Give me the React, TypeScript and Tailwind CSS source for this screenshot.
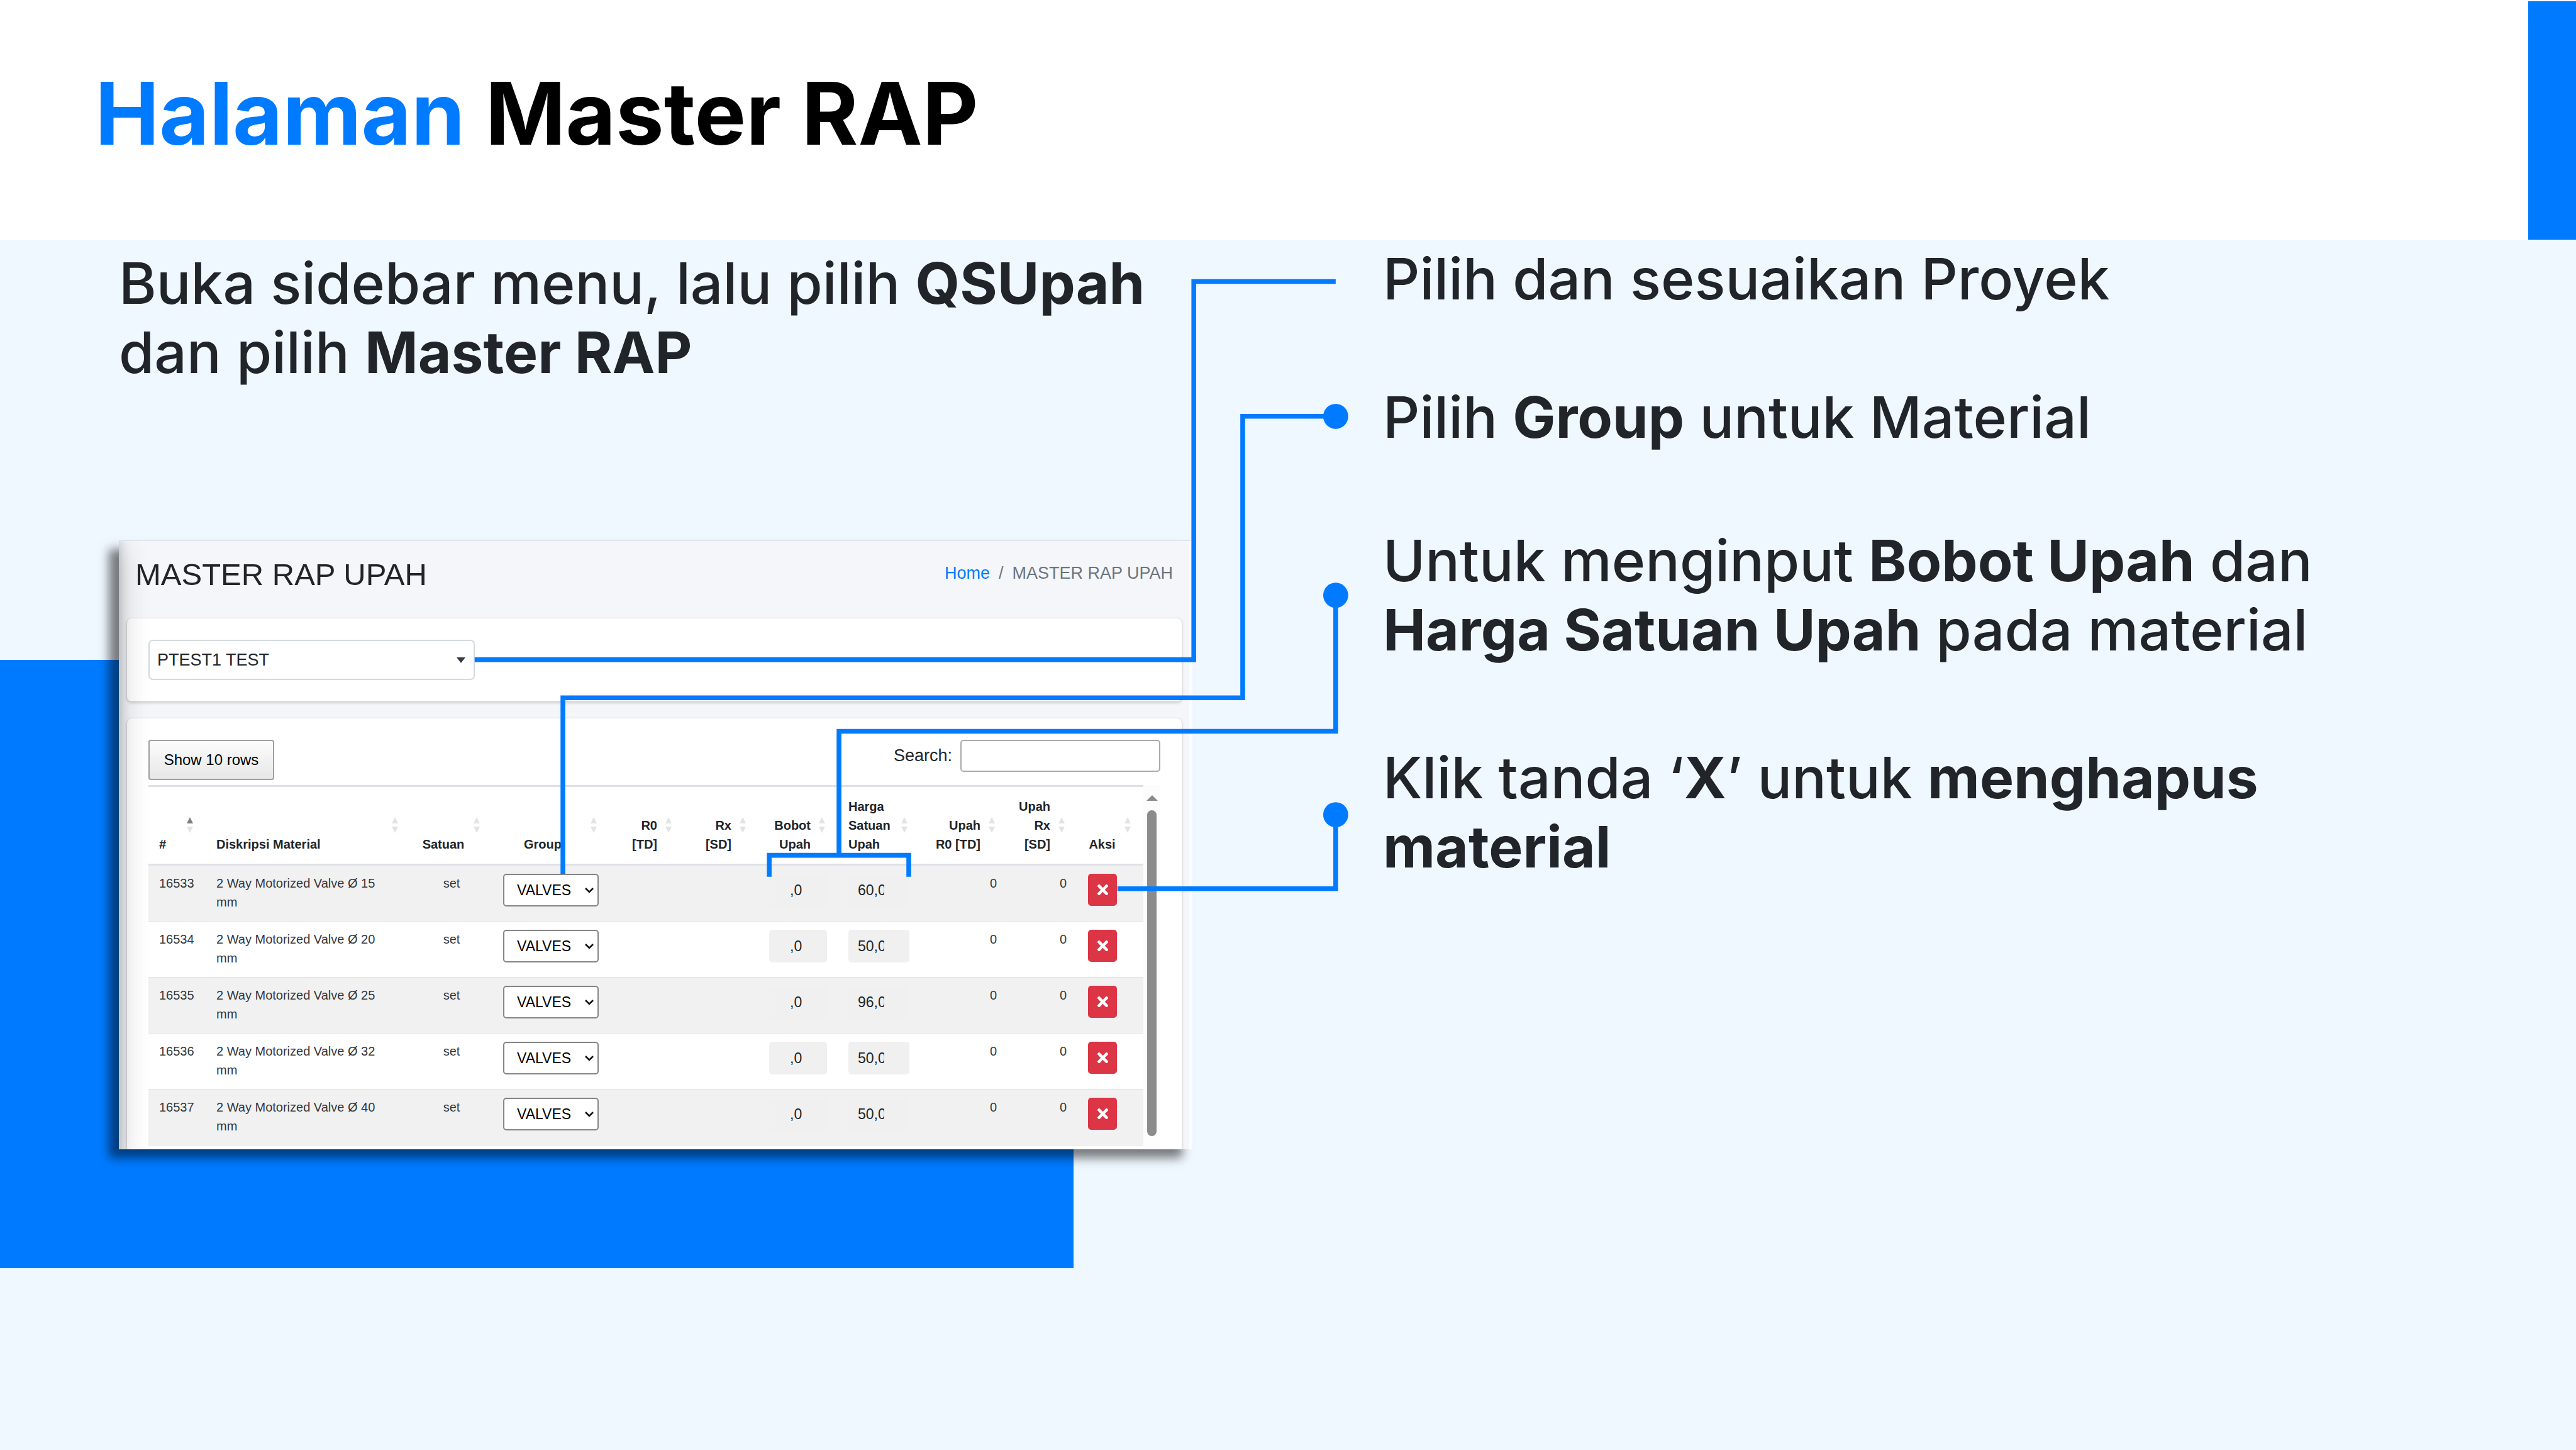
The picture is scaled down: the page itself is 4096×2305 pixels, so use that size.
import { FaTimes } from "react-icons/fa";

type Column = {
  lines: string[];
  align: string;
  width: string;
  active?: boolean;
};

const columns: Column[] = [
  { lines: ["#"], align: "text-left", width: "w-[91px]", active: true },
  { lines: ["Diskripsi Material"], align: "text-left", width: "w-[326px]" },
  { lines: ["Satuan"], align: "text-center", width: "w-[130px]" },
  { lines: ["Group"], align: "text-center", width: "w-[186px]" },
  { lines: ["R0", "[TD]"], align: "text-right", width: "w-[119px]" },
  { lines: ["Rx", "[SD]"], align: "text-right", width: "w-[118px]" },
  { lines: ["Bobot", "Upah"], align: "text-right", width: "w-[126px]" },
  { lines: ["Harga", "Satuan", "Upah"], align: "text-left", width: "w-[131px]" },
  { lines: ["Upah", "R0 [TD]"], align: "text-right", width: "w-[139px]" },
  { lines: ["Upah", "Rx", "[SD]"], align: "text-right", width: "w-[111px]" },
  { lines: ["Aksi"], align: "text-center", width: "w-auto" },
];

const rows = [
  { id: "16533", size: "15", price: "60,0" },
  { id: "16534", size: "20", price: "50,0" },
  { id: "16535", size: "25", price: "96,0" },
  { id: "16536", size: "32", price: "50,0" },
  { id: "16537", size: "40", price: "50,0" },
];

function SortIcon({ active }: { active?: boolean }) {
  return (
    <svg
      viewBox="0 0 10 25"
      className="absolute right-5 bottom-[49px] h-[25px] w-[10px]"
      aria-hidden="true"
    >
      <path d="M5 0 L10 10 H0 Z" fill={active ? "#7d8084" : "#e2e4e4"} />
      <path d="M0 15 H10 L5 25 Z" fill="#e2e4e4" />
    </svg>
  );
}

function MaterialTable() {
  return (
    <table className="w-full min-w-0 flex-1 table-fixed border-collapse text-[20px] leading-[30px]">
      <thead>
        <tr>
          {columns.map((c) => (
            <th
              key={c.lines.join(" ")}
              scope="col"
              className={`relative border-y-3 border-[#dee2e6] py-4 pr-[43px] pl-[17px] align-bottom font-bold whitespace-nowrap ${c.align} ${c.width}`}
            >
              <div className="flex min-h-[90px] flex-col justify-end">
                {c.lines.map((l) => (
                  <span key={l}>{l}</span>
                ))}
              </div>
              <SortIcon active={c.active} />
            </th>
          ))}
        </tr>
      </thead>
      <tbody>
        {rows.map((r) => (
          <tr
            key={r.id}
            className="h-[89px] border-b border-[#dee2e6] align-top text-[#33383d] first:h-[90px] odd:bg-[#f1f1f1]"
          >
            <td className="px-[17px] pt-[13px]">{r.id}</td>
            <td className="px-[17px] pt-[13px]">
              2 Way Motorized Valve Ø {r.size}
              <br />
              mm
            </td>
            <td className="px-[17px] pt-[13px] text-center">set</td>
            <td className="px-[17px] pt-[13px]">
              <div className="relative h-[52px] w-[152px]">
                <select
                  aria-label={`Group ${r.id}`}
                  className="h-full w-full appearance-none rounded-[5px] border-2 border-[#858585] bg-white pl-5 text-[23px] text-black"
                >
                  <option>VALVES</option>
                </select>
                <svg
                  viewBox="0 0 14 9"
                  className="pointer-events-none absolute top-[22px] right-2 h-[9px] w-[14px]"
                  aria-hidden="true"
                >
                  <path d="M1 1 L7 7 L13 1" fill="none" stroke="#111" strokeWidth="2.6" />
                </svg>
              </div>
            </td>
            <td />
            <td />
            <td className="px-[17px] pt-[13px]">
              <input
                aria-label={`Bobot Upah ${r.id}`}
                defaultValue=",0"
                className="block h-[52px] w-full rounded-[5px] bg-[#f0f0f0] pl-[33px] text-[23px] text-[#212529]"
              />
            </td>
            <td className="px-[17px] pt-[13px]">
              <input
                aria-label={`Harga Satuan Upah ${r.id}`}
                defaultValue={r.price}
                className="block h-[52px] w-full rounded-[5px] bg-[#f0f0f0] pr-10 pl-[15px] text-[23px] text-[#212529]"
              />
            </td>
            <td className="px-[17px] pt-[13px] text-right">0</td>
            <td className="px-[17px] pt-[13px] text-right">0</td>
            <td className="pt-[13px] pl-[17px]">
              <button
                type="button"
                aria-label={`Hapus ${r.id}`}
                className="flex h-[51px] w-[46px] items-center justify-center rounded-[5px] bg-[#dc3545] text-[25px] text-white"
              >
                <FaTimes />
              </button>
            </td>
          </tr>
        ))}
      </tbody>
    </table>
  );
}

function Scrollbar() {
  return (
    <div className="flex w-[27px] flex-col items-center bg-[#fcfcfc] pt-4 pb-[21px]" aria-hidden="true">
      <svg viewBox="0 0 18 9" className="h-[9px] w-[18px]">
        <path d="M9 0 L18 9 H0 Z" fill="#8b8b8b" />
      </svg>
      <div className="mt-[15px] w-[15px] flex-1 rounded-full bg-[#8b8b8b]" />
    </div>
  );
}

function MasterRapPanel() {
  return (
    <section className="relative mt-[244px] shadow-[-16px_14px_15px_rgba(0,0,0,0.5)]">
      <div className="relative h-[968px] overflow-hidden border-t border-r-5 border-t-[#d9dfe5] border-r-[#fafcff] bg-[#f4f6f9] font-['Liberation_Sans',Arial,sans-serif] text-[#212529]">
        <div className="flex h-[123px] items-start justify-between pr-[26px] pl-[26px]">
          <h2 className="mt-6 text-[49px] leading-[58px]">MASTER RAP UPAH</h2>
          <nav className="mt-[31px] flex gap-[14px] text-[27px] leading-[40px] text-[#6c757d]">
            <a href="#home" className="text-[#007bff]">
              Home
            </a>
            <span>/</span>
            <span>MASTER RAP UPAH</span>
          </nav>
        </div>

        <div className="mr-3 ml-[13px] flex flex-col gap-[27px]">
          <div className="rounded-[7px] bg-white px-[34px] py-[34px] shadow-[0_0_2px_rgba(0,0,0,0.125),0_2px_5px_rgba(0,0,0,0.2)]">
            <div className="relative h-[64px] w-[519px]">
              <select
                aria-label="Proyek"
                className="h-full w-full appearance-none rounded-[7px] border-2 border-[#d3d9df] bg-white pl-3 text-[27px] text-[#212529]"
              >
                <option>PTEST1 TEST</option>
              </select>
              <svg
                viewBox="0 0 14 9"
                className="pointer-events-none absolute top-7 right-[15px] h-[9px] w-[14px]"
                aria-hidden="true"
              >
                <path d="M0 0 H14 L7 9 Z" fill="#343a40" />
              </svg>
            </div>
          </div>

          <div className="rounded-t-[7px] bg-white px-[34px] pt-[34px] shadow-[0_0_2px_rgba(0,0,0,0.125),0_2px_5px_rgba(0,0,0,0.2)]">
            <div className="flex h-[72px] items-start justify-between">
              <button
                type="button"
                className="h-[64px] w-[200px] rounded-[4px] border-2 border-[#9f9f9f] bg-linear-to-b from-[#fcfcfc] to-[#e7e7e7] text-[24px] text-black"
              >
                Show 10 rows
              </button>
              <label className="flex items-center gap-[13px] text-[27px] font-normal">
                Search:
                <input
                  type="search"
                  className="h-[51px] w-[318px] rounded-[5px] border-2 border-[#aaaaaa] bg-white px-2"
                />
              </label>
            </div>
            <div className="flex h-[600px] items-start">
              <MaterialTable />
              <div className="flex h-[579px] self-start">
                <Scrollbar />
              </div>
            </div>
          </div>
        </div>

        <div className="pointer-events-none absolute -top-4 bottom-0 -left-10 w-10 shadow-[0_24px_47px_rgba(0,0,0,0.25),0_17px_17px_rgba(0,0,0,0.22)]" />
      </div>
    </section>
  );
}

/* Lines that tie each instruction to its control. */
function Connectors() {
  return (
    <svg
      viewBox="0 0 4320 2431"
      className="pointer-events-none absolute top-0 left-0 w-full"
      fill="none"
      stroke="#007bff"
      strokeWidth="8"
      aria-hidden="true"
    >
      <path d="M796 1106 H2002 V472 H2240" />
      <path d="M944 1465 V1170 H2084 V698 H2240" />
      <path d="M2240 998 V1226 H1407 V1434" />
      <path d="M1290 1470 V1434 H1524 V1470" />
      <path d="M1874 1490 H2240 V1366" />
      <g fill="#007bff" stroke="none">
        <circle cx="2240" cy="698" r="21" />
        <circle cx="2240" cy="998" r="21" />
        <circle cx="2240" cy="1366" r="21" />
      </g>
    </svg>
  );
}

export default function App() {
  return (
    <div className="relative flex min-h-screen flex-col overflow-hidden bg-[#f0f8ff] font-[Inter,sans-serif] text-[#212529]">
      <header className="flex h-[381px] justify-between bg-white">
        <h1 className="pt-[97px] pl-[151px] text-[137px] leading-[166px] font-bold text-black [text-rendering:optimizeLegibility]">
          <span className="text-[#007bff]">Halaman</span> Master RAP
        </h1>
        <div className="mt-0.5 w-[76px] bg-[#007bff]" />
      </header>

      <main className="relative grid flex-1 grid-cols-[2196fr_1900fr] items-start text-[91px] leading-[110px] font-medium">
        <div className="absolute top-[668px] left-0 h-[967px] w-[1707px] bg-[#007bff]" />
        <div className="relative min-w-0 pt-[14px] pr-[300px] pl-[189px]">
          <p className="whitespace-nowrap [text-rendering:optimizeLegibility]">
            Buka sidebar menu, lalu pilih <b className="font-bold">QSUpah</b>
            <br />
            dan pilih <b className="font-bold">Master RAP</b>
          </p>
          <div className="text-base font-normal">
            <MasterRapPanel />
          </div>
        </div>

        <div className="relative min-w-0 pt-[7px] pl-[3px] [text-rendering:optimizeLegibility]">
          <p>Pilih dan sesuaikan Proyek</p>
          <p className="mt-[110px]">
            Pilih <b className="font-bold">Group</b> untuk Material
          </p>
          <p className="mt-[118px]">
            Untuk menginput <b className="font-bold">Bobot Upah</b> dan
            <br />
            <b className="font-bold">Harga Satuan Upah</b> pada material
          </p>
          <p className="mt-[125px]">
            Klik tanda ‘<b className="font-bold">X</b>’ untuk <b className="font-bold">menghapus</b>
            <br />
            <b className="font-bold">material</b>
          </p>
        </div>
      </main>

      <Connectors />
    </div>
  );
}
